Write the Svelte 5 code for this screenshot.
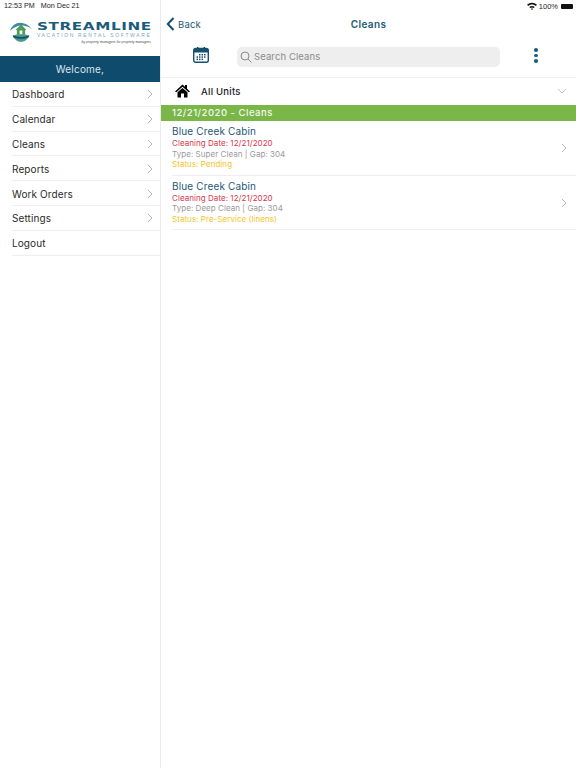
<script>
  const menu = ["Dashboard", "Calendar", "Cleans", "Reports", "Work Orders", "Settings", "Logout"];
  const cleans = [
    { name: "Blue Creek Cabin", date: "12/21/2020", type: "Super Clean", gap: 304, status: "Pending" },
    { name: "Blue Creek Cabin", date: "12/21/2020", type: "Deep Clean", gap: 304, status: "Pre-Service (linens)" }
  ];
</script>

<div class="page">
  <aside class="sidebar">
    <div class="status-left">12:53 PM &nbsp;&nbsp;Mon Dec 21</div>
    <div class="logo">
      <svg class="logo-mark" width="24" height="26" viewBox="0 0 26 26">
        <path d="M1 13 C4 3 16 0 25 11 C17 5 8 6 1 13Z" fill="#3f88a8" />
        <path d="M13 6 L19 12 L17.5 12 L17.5 17 L8.500 17 L8.500 12 L7 12Z" fill="#4f9a55" />
        <rect x="11.500" y="12.500" width="3" height="4.500" fill="#fff" />
        <path d="M4 18 C9 16 17 16 22 18 C20 23 16 25 13 25 C10 25 6 23 4 18Z" fill="#4a9a8c" />
        <path d="M4 18 C9 20 17 20 22 18 L21 20 C16 22 10 22 5 20Z" fill="#17506e" />
      </svg>
      <div class="logo-text">
        <div class="logo-name">STREAMLINE</div>
        <div class="logo-sub">VACATION RENTAL SOFTWARE</div>
        <div class="logo-tag">by property managers for property managers</div>
      </div>
    </div>
    <div class="welcome">Welcome,</div>
    <nav class="menu">
      {#each menu as item}
        <div class="menu-row">
          <span>{item}</span>
          {#if item !== "Logout"}
            <svg width="6" height="10" viewBox="0 0 6 10"><path d="M1 1 L5 5 L1 9" fill="none" stroke="#b4b4b4" stroke-width="1" /></svg>
          {/if}
        </div>
      {/each}
    </nav>
  </aside>

  <main class="content">
    <div class="status-right">
      <svg width="10" height="8" viewBox="0 0 10 8">
        <path d="M0 2.800 C3 0 7 0 10 2.800 L8.800 4 C6.500 2 3.500 2 1.200 4Z M2.200 5 C3.800 3.600 6.200 3.600 7.800 5 L6.700 6.100 C5.700 5.300 4.300 5.300 3.300 6.100Z M4 6.900 C4.600 6.500 5.400 6.500 6 6.900 L5 8Z" fill="#111" />
      </svg>
      <span>100%</span>
      <span class="battery"></span>
    </div>

    <header class="topbar">
      <div class="back">
        <svg width="9" height="14" viewBox="0 0 9 14"><path d="M7.500 1 L1.800 7 L7.500 13" fill="none" stroke="#17506e" stroke-width="2" /></svg>
        <span>Back</span>
      </div>
      <div class="title">Cleans</div>
    </header>

    <div class="toolbar">
      <svg class="cal" width="16" height="16" viewBox="0 0 16 16">
        <rect x="0.700" y="1.500" width="14.600" height="13.800" rx="2" fill="#fff" stroke="#17506e" stroke-width="1.400" />
        <path d="M1 2.500 a1.500 1.500 0 0 1 1.500 -1 h11 a1.500 1.500 0 0 1 1.500 1 V5.500 H1Z" fill="#17506e" />
        <rect x="4" y="0" width="1.400" height="3" fill="#17506e" />
        <rect x="10.600" y="0" width="1.400" height="3" fill="#17506e" />
        <g fill="#17506e">
          <rect x="6" y="7" width="1.500" height="1.500" /><rect x="8.500" y="7" width="1.500" height="1.500" /><rect x="11" y="7" width="1.500" height="1.500" />
          <rect x="3.500" y="9.300" width="1.500" height="1.500" /><rect x="6" y="9.300" width="1.500" height="1.500" /><rect x="8.500" y="9.300" width="1.500" height="1.500" /><rect x="11" y="9.300" width="1.500" height="1.500" />
          <rect x="3.500" y="11.600" width="1.500" height="1.500" /><rect x="6" y="11.600" width="1.500" height="1.500" /><rect x="8.500" y="11.600" width="1.500" height="1.500" />
        </g>
      </svg>
      <div class="search">
        <svg width="12" height="12" viewBox="0 0 12 12">
          <circle cx="5" cy="5" r="4" fill="none" stroke="#8a8a8a" stroke-width="1" />
          <path d="M8 8 L11.500 11.500" stroke="#8a8a8a" stroke-width="1" />
        </svg>
        <span>Search Cleans</span>
      </div>
      <div class="dots"><i></i><i></i><i></i></div>
    </div>

    <div class="units">
      <svg width="15" height="14" viewBox="0 0 15 14">
        <path d="M7.500 0.500 L10 2.800 L10 1 L12 1 L12 4.700 L15 7.500 L13.700 8.300 L7.500 2.800 L1.300 8.300 L0 7.500Z" fill="#000" />
        <path d="M2.500 8.300 L7.500 3.900 L12.500 8.300 L12.500 13.500 L9 13.500 L9 9.500 L6 9.500 L6 13.500 L2.500 13.500Z" fill="#000" />
      </svg>
      <span class="units-label">All Units</span>
      <svg class="units-caret" width="10" height="6" viewBox="0 0 10 6"><path d="M1 1 L5 5 L9 1" fill="none" stroke="#c4c4c4" stroke-width="1" /></svg>
    </div>

    <div class="group">12/21/2020 - Cleans</div>

    {#each cleans as c}
      <div class="clean">
        <div class="clean-body">
          <div class="clean-name">{c.name}</div>
          <div class="clean-date">Cleaning Date: {c.date}</div>
          <div class="clean-type">Type: {c.type} | Gap: {c.gap}</div>
          <div class="clean-status">Status: {c.status}</div>
        </div>
        <svg width="6" height="10" viewBox="0 0 6 10"><path d="M1 1 L5 5 L1 9" fill="none" stroke="#b4b4b4" stroke-width="1" /></svg>
      </div>
    {/each}
  </main>
</div>

<style>
  :global(body) {
    margin: 0;
    background: #fff;
  }

  .page {
    display: flex;
    width: 576px;
    height: 768px;
    overflow: hidden;
    font-family: "Inter", "Liberation Sans", sans-serif;
    color: #222;
  }

  .sidebar {
    width: 161px;
    flex: none;
    box-sizing: border-box;
    border-right: 1px solid #ececec;
  }

  .status-left {
    height: 12px;
    padding-left: 4px;
    font-family: "Liberation Sans", sans-serif;
    font-size: 7.2px;
    line-height: 12px;
    color: #222;
  }

  .logo {
    display: flex;
    align-items: flex-start;
    height: 44px;
    box-sizing: border-box;
    padding: 9px 0 0 9px;
    gap: 4px;
  }

  .logo-mark {
    margin-top: -3px;
    flex: none;
  }

  .logo-text {
    width: 114px;
    text-align: left;
  }

  .logo-name {
    font-family: "DejaVu Sans", sans-serif;
    font-weight: 700;
    font-size: 10px;
    line-height: 11px;
    letter-spacing: 0.4px;
    color: #1b5c7c;
    white-space: nowrap;
    transform: scaleX(1.52);
    transform-origin: left;
  }

  .logo-sub {
    font-family: "Liberation Sans", sans-serif;
    font-size: 5px;
    line-height: 6px;
    letter-spacing: 1.65px;
    color: #7fa6ba;
    white-space: nowrap;
  }

  .logo-tag {
    font-family: "Liberation Sans", sans-serif;
    font-style: italic;
    font-size: 3.500px;
    line-height: 8px;
    text-align: right;
    color: #444;
    white-space: nowrap;
  }

  .welcome {
    height: 26px;
    background: #0f4b6c;
    color: #dbe6ec;
    font-size: 10px;
    line-height: 27px;
    text-align: center;
    letter-spacing: 0.2px;
  }

  .menu {
    padding-left: 12px;
  }

  .menu-row {
    display: flex;
    align-items: center;
    justify-content: space-between;
    height: 24.8px;
    box-sizing: border-box;
    padding: 1px 7px 0 0;
    border-bottom: 1px solid #eeeeee;
    font-size: 10px;
    letter-spacing: 0.1px;
    color: #2a2a2a;
  }

  .content {
    flex: 1;
    min-width: 0;
  }

  .status-right {
    display: flex;
    align-items: center;
    justify-content: flex-end;
    gap: 2px;
    height: 12px;
    padding-right: 3px;
    font-family: "Liberation Sans", sans-serif;
    font-size: 7.500px;
    color: #222;
  }

  .battery {
    width: 12px;
    height: 5px;
    margin-left: 1px;
    border-radius: 1px;
    background: #111;
  }

  .topbar {
    position: relative;
    display: flex;
    align-items: center;
    height: 24px;
    padding-left: 5px;
  }

  .back {
    display: flex;
    align-items: center;
    gap: 3px;
    font-size: 9.500px;
    letter-spacing: 0.2px;
    color: #1f5a78;
  }

  .title {
    position: absolute;
    left: 0;
    right: 0;
    text-align: center;
    font-size: 10px;
    font-weight: 600;
    letter-spacing: 0.4px;
    color: #1f5a78;
  }

  .toolbar {
    display: flex;
    align-items: center;
    height: 41px;
    box-sizing: border-box;
    padding: 0 0 0 32px;
  }

  .cal {
    flex: none;
    margin-bottom: 3px;
  }

  .search {
    display: flex;
    align-items: center;
    gap: 2px;
    width: 263px;
    height: 20px;
    margin-left: 28px;
    padding-left: 3px;
    box-sizing: border-box;
    border-radius: 5px;
    background: #eeeeee;
    font-size: 9.500px;
    letter-spacing: 0.1px;
    color: #8c8c8c;
  }

  .dots {
    display: flex;
    flex-direction: column;
    gap: 2px;
    margin-left: 34px;
    margin-bottom: 2px;
  }

  .dots i {
    display: block;
    width: 3.500px;
    height: 3.500px;
    border-radius: 50%;
    background: #1f5f7d;
  }

  .units {
    display: flex;
    align-items: center;
    height: 28px;
    padding: 0 9px 1px 14px;
    box-sizing: border-box;
    border-top: 1px solid #f0f0f0;
  }

  .units-label {
    margin-left: 11px;
    font-size: 9.500px;
    font-weight: 500;
    letter-spacing: 0.25px;
    color: #1a1a1a;
  }

  .units-caret {
    margin-left: auto;
  }

  .group {
    height: 16px;
    padding-left: 11px;
    background: #7ab648;
    color: #f4f9ef;
    font-size: 9.500px;
    font-weight: 500;
    line-height: 16px;
    letter-spacing: 0.5px;
  }

  .clean {
    display: flex;
    align-items: center;
    margin-left: 11px;
    height: 54.700px;
    padding-right: 9px;
    box-sizing: border-box;
    border-bottom: 1px solid #eeeeee;
  }

  .clean-body {
    flex: 1;
    padding-bottom: 1px;
  }

  .clean-name {
    font-size: 10px;
    line-height: 13px;
    letter-spacing: 0.15px;
    color: #1d5876;
  }

  .clean-date,
  .clean-type,
  .clean-status {
    font-size: 8px;
    line-height: 10.5px;
    letter-spacing: 0.05px;
  }

  .clean-date {
    color: #d8384c;
  }

  .clean-type {
    color: #9a9a9a;
  }

  .clean-status {
    color: #f3c51f;
  }
</style>
